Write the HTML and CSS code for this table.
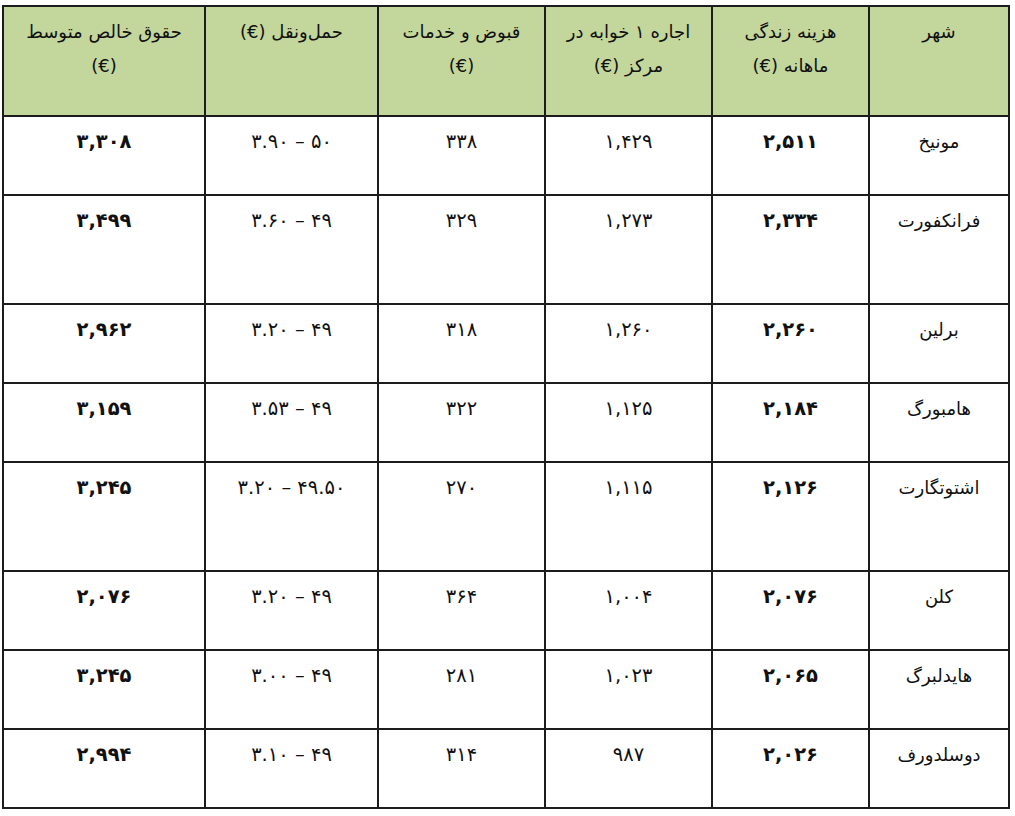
FILE: index.html
```html
<!DOCTYPE html>
<html lang="fa" dir="rtl">
<head>
<meta charset="utf-8">
<title>هزینه زندگی در شهرهای آلمان</title>
<link rel="stylesheet" href="styles.css">
</head>
<body>
<table class="cost-table">
  <colgroup>
    <col class="c-city">
    <col class="c-cost">
    <col class="c-rent">
    <col class="c-util">
    <col class="c-trans">
    <col class="c-salary">
  </colgroup>
  <thead>
    <tr class="head-row">
      <th>شهر</th>
      <th>هزینه زندگی<br>ماهانه (€)</th>
      <th>اجاره ۱ خوابه در<br>مرکز (€)</th>
      <th>قبوض و خدمات<br>(€)</th>
      <th>حمل‌ونقل (€)</th>
      <th>حقوق خالص متوسط<br>(€)</th>
    </tr>
  </thead>
  <tbody>
    <tr class="row">
      <td>مونیخ</td><td class="n b">۲,۵۱۱</td><td class="n">۱,۴۲۹</td><td class="n">۳۳۸</td><td class="n">۵۰ – ۳.۹۰</td><td class="n b">۳,۳۰۸</td>
    </tr>
    <tr class="row tall">
      <td>فرانکفورت</td><td class="n b">۲,۳۳۴</td><td class="n">۱,۲۷۳</td><td class="n">۳۲۹</td><td class="n">۴۹ – ۳.۶۰</td><td class="n b">۳,۴۹۹</td>
    </tr>
    <tr class="row">
      <td>برلین</td><td class="n b">۲,۲۶۰</td><td class="n">۱,۲۶۰</td><td class="n">۳۱۸</td><td class="n">۴۹ – ۳.۲۰</td><td class="n b">۲,۹۶۲</td>
    </tr>
    <tr class="row">
      <td>هامبورگ</td><td class="n b">۲,۱۸۴</td><td class="n">۱,۱۲۵</td><td class="n">۳۲۲</td><td class="n">۴۹ – ۳.۵۳</td><td class="n b">۳,۱۵۹</td>
    </tr>
    <tr class="row tall">
      <td>اشتوتگارت</td><td class="n b">۲,۱۲۶</td><td class="n">۱,۱۱۵</td><td class="n">۲۷۰</td><td class="n">۴۹.۵۰ – ۳.۲۰</td><td class="n b">۳,۲۴۵</td>
    </tr>
    <tr class="row">
      <td>کلن</td><td class="n b">۲,۰۷۶</td><td class="n">۱,۰۰۴</td><td class="n">۳۶۴</td><td class="n">۴۹ – ۳.۲۰</td><td class="n b">۲,۰۷۶</td>
    </tr>
    <tr class="row">
      <td>هایدلبرگ</td><td class="n b">۲,۰۶۵</td><td class="n">۱,۰۲۳</td><td class="n">۲۸۱</td><td class="n">۴۹ – ۳.۰۰</td><td class="n b">۳,۲۴۵</td>
    </tr>
    <tr class="row">
      <td>دوسلدورف</td><td class="n b">۲,۰۲۶</td><td class="n">۹۸۷</td><td class="n">۳۱۴</td><td class="n">۴۹ – ۳.۱۰</td><td class="n b">۲,۹۹۴</td>
    </tr>
  </tbody>
</table>
</body>
</html>
```
FILE: styles.css
```css
html, body {
  background: #ffffff;
}
body {
  margin: 0;
  padding: 5px 5px 0 4px;
  font-family: "DejaVu Sans", "Noto Sans", sans-serif;
  color: #111111;
}
.cost-table {
  border-collapse: collapse;
  width: 1006px;
  table-layout: fixed;
  font-size: 18px;
  line-height: 34px;
}
.c-city { width: 140px; }
.c-cost { width: 157px; }
.c-rent { width: 167px; }
.c-util { width: 167px; }
.c-trans { width: 173px; }
.c-salary { width: 202px; }

.cost-table th,
.cost-table td {
  border: 2px solid #1c1c1c;
  padding: 8px 6px 0;
  text-align: center;
  vertical-align: top;
}
.cost-table th {
  background: #c3d69b;
  font-weight: normal;
}
.head-row { height: 110px; }
.row { height: 79px; }
.row.tall { height: 109px; }
.n { font-size: 19.5px; }
.b { font-weight: bold; }
```
